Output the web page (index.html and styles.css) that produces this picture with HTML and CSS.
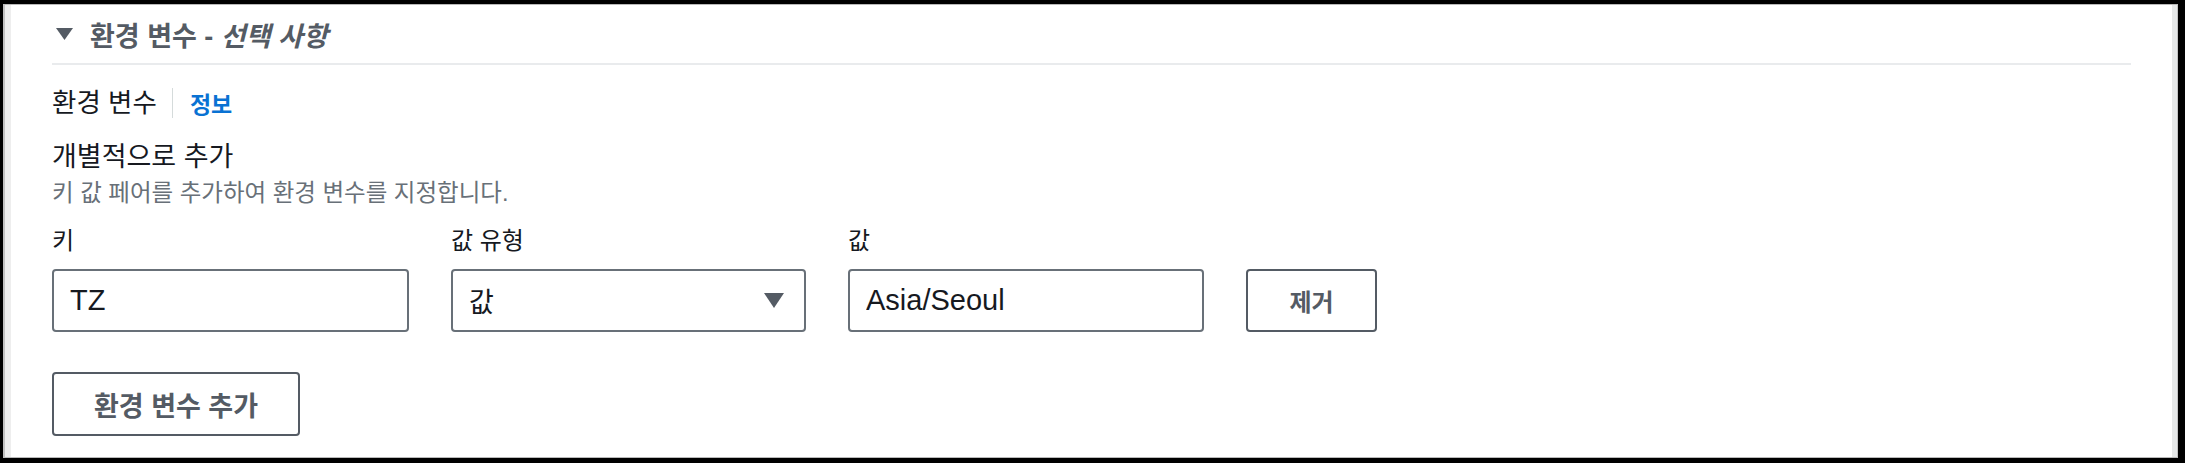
FILE: index.html
```html
<!DOCTYPE html>
<html lang="ko">
<head>
    <meta charset="UTF-8">
    <meta name="viewport" content="width=device-width, initial-scale=1.0">
    <title>환경 변수</title>
    <link rel="stylesheet" href="styles.css">
</head>
<body>
    <div class="window">
        <div class="panel">
            <div class="section-head">
                <svg class="caret" width="17" height="12" viewBox="0 0 17 12"><path d="M0 0 H17 L8.5 12 Z" fill="#545b64"/></svg>
                <h2>환경 변수 - <em>선택 사항</em></h2>
            </div>

            <div class="field-head">
                <span class="field-title">환경 변수</span>
                <a class="info" href="#">정보</a>
            </div>

            <div class="group-title">개별적으로 추가</div>
            <div class="group-desc">키 값 페어를 추가하여 환경 변수를 지정합니다.</div>

            <div class="pair-grid">
                <label>키</label>
                <label>값 유형</label>
                <label>값</label>
                <span></span>

                <input type="text" value="TZ">
                <div class="select">
                    <span>값</span>
                    <svg width="20" height="15" viewBox="0 0 20 15"><path d="M0 0 H20 L10 15 Z" fill="#545b64"/></svg>
                </div>
                <input type="text" value="Asia/Seoul">
                <button class="btn">제거</button>
            </div>

            <button class="btn add">환경 변수 추가</button>
        </div>
    </div>
</body>
</html>
```

FILE: styles.css
```css
html, body {
    margin: 0;
    padding: 0;
    height: 463px;
    overflow: hidden;
    background-color: #000;
}
body {
    font-family: "Liberation Sans", "Noto Sans CJK KR", sans-serif;
    color: #16191f;
}
.window {
    margin: 4px 7px 0 3px;
    height: 454px;
    box-sizing: border-box;
    border-top: 1px solid #b9b9b9;
    border-bottom: 1px solid #b9b9b9;
    border-left: 2px solid #c2c2c2;
    border-right: 1px solid #c2c2c2;
    background-color: #fff;
}
.panel {
    height: 100%;
    box-sizing: border-box;
    border-left: 6px solid #eeeeee;
    border-right: 5px solid #e6e8e8;
    padding: 0 41px;
}
.section-head {
    display: flex;
    align-items: center;
    height: 58px;
    border-bottom: 2px solid #e9ebed;
}
.caret {
    margin-left: 4px;
    margin-right: 17px;
}
.section-head h2 {
    margin: 0;
    font-size: 27px;
    font-weight: bold;
    color: #545b64;
}
.section-head em {
    font-style: italic;
}
.field-head {
    display: flex;
    align-items: center;
    margin-top: 21px;
    height: 34px;
}
.field-title {
    font-size: 26.5px;
    padding-right: 15px;
    border-right: 1px solid #d5dbdb;
    line-height: 30px;
}
.info {
    font-size: 23px;
    font-weight: bold;
    color: #0972d3;
    text-decoration: none;
    padding-left: 17px;
}
.group-title {
    margin-top: 20px;
    font-size: 27px;
    line-height: 34px;
}
.group-desc {
    font-size: 23.5px;
    line-height: 38px;
    color: #687078;
}
.pair-grid {
    display: grid;
    grid-template-columns: 357px 355px 356px 131px;
    column-gap: 42px;
    row-gap: 11px;
    margin-top: 12px;
}
.pair-grid label {
    font-size: 24px;
    line-height: 34px;
}
.pair-grid input,
.select {
    height: 63px;
    box-sizing: border-box;
    border: 2px solid #687078;
    border-radius: 4px;
    padding: 0 16px;
    font-family: "Liberation Sans", "Noto Sans CJK KR", sans-serif;
    font-size: 29px;
    color: #16191f;
    background: #fff;
}
.select {
    display: flex;
    align-items: center;
    justify-content: space-between;
    padding-right: 20px;
    font-size: 27px;
}
.btn {
    height: 63px;
    box-sizing: border-box;
    border: 2px solid #545b64;
    border-radius: 4px;
    background: #fff;
    font-family: "Liberation Sans", "Noto Sans CJK KR", sans-serif;
    font-size: 24px;
    font-weight: bold;
    color: #545b64;
    cursor: pointer;
}
.add {
    display: block;
    margin-top: 40px;
    width: 248px;
    height: 64px;
    font-size: 27px;
}
```
